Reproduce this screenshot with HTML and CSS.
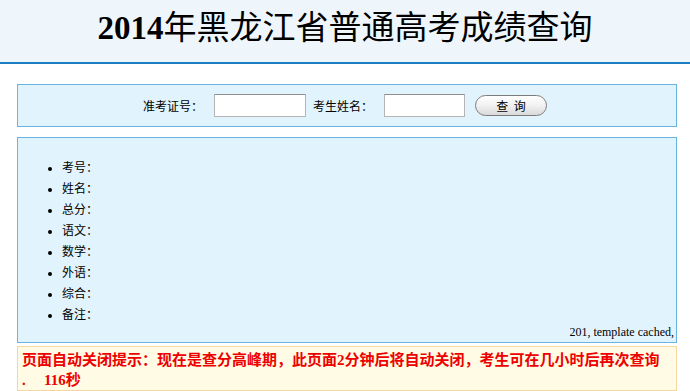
FILE: index.html
```html
<!DOCTYPE html>
<html>
<head>
    <meta charset="utf-8">
    <title>2014年黑龙江省普通高考成绩查询</title>
    <link rel="stylesheet" href="styles.css">
</head>
<body>
    <div class="header">
        <h1><b>2014</b>年黑龙江省普通高考成绩查询</h1>
    </div>

    <div class="main">
        <div class="box query">
            <label>准考证号：</label>
            <input type="text" class="ksh">
            <label>考生姓名：</label>
            <input type="text" class="xm">
            <button type="button">查&nbsp;&nbsp;询</button>
        </div>

        <div class="box result">
            <ul>
                <li>考号：</li>
                <li>姓名：</li>
                <li>总分：</li>
                <li>语文：</li>
                <li>数学：</li>
                <li>外语：</li>
                <li>综合：</li>
                <li>备注：</li>
            </ul>
            <div class="cache">201, template cached,</div>
        </div>

        <div class="notice">
            页面自动关闭提示：现在是查分高峰期，此页面2分钟后将自动关闭，考生可在几小时后再次查询<br><span class="dot">.</span>116秒
        </div>
    </div>
</body>
</html>
```

FILE: styles.css
```css
body { margin: 0; background: #fff; font-family: "Liberation Serif", "Noto Sans CJK SC", serif; font-size: 12px; color: #000; }
.header { height: 62px; background: #eff6fb; border-bottom: 2px solid #1a7dc2; text-align: center; }
.header h1 { margin: 0; padding-top: 9px; font-size: 33px; line-height: 38px; font-weight: normal; }
.header h1 b { font-weight: bold; }
.main { width: 660px; margin: 20px 0 0 17px; }
.box { background: #e1f4fe; border: 1px solid #68b4e0; }
.query { height: 41px; display: flex; align-items: center; justify-content: center; padding-right: 4px; }
.query label { font-size: 12px; margin-right: 11px; }
.query input { padding: 0; margin: 0 7px 0 0; border: 1px solid #b5b5b5; border-top-color: #8e8e8e; background: #fff; box-sizing: border-box; }
.query .ksh { width: 92px; height: 23px; }
.query .xm { width: 81px; height: 23px; margin-right: 10px; }
.query button { width: 72px; height: 21px; padding: 0; border: 1px solid #7c7c7c; border-radius: 11px; background: linear-gradient(#ffffff, #f1f1f1 50%, #d9d9d9); font-family: "Noto Sans CJK SC", sans-serif; font-size: 12px; color: #000; }
.result { margin-top: 10px; height: 204px; }
.result ul { margin: 20px 0 0; padding-left: 44px; }
.result li { line-height: 21px; font-size: 12px; }
.cache { text-align: right; padding-right: 2px; margin-top: -2px; line-height: 16px; }
.notice { margin-top: 3px; height: 40px; padding: 3px 4px 0; background: #fffbe4; border: 1px solid #f6d7a0; color: #e00; font-weight: bold; font-size: 15px; line-height: 20px; }
.notice .dot { display: inline-block; width: 22px; }
```
